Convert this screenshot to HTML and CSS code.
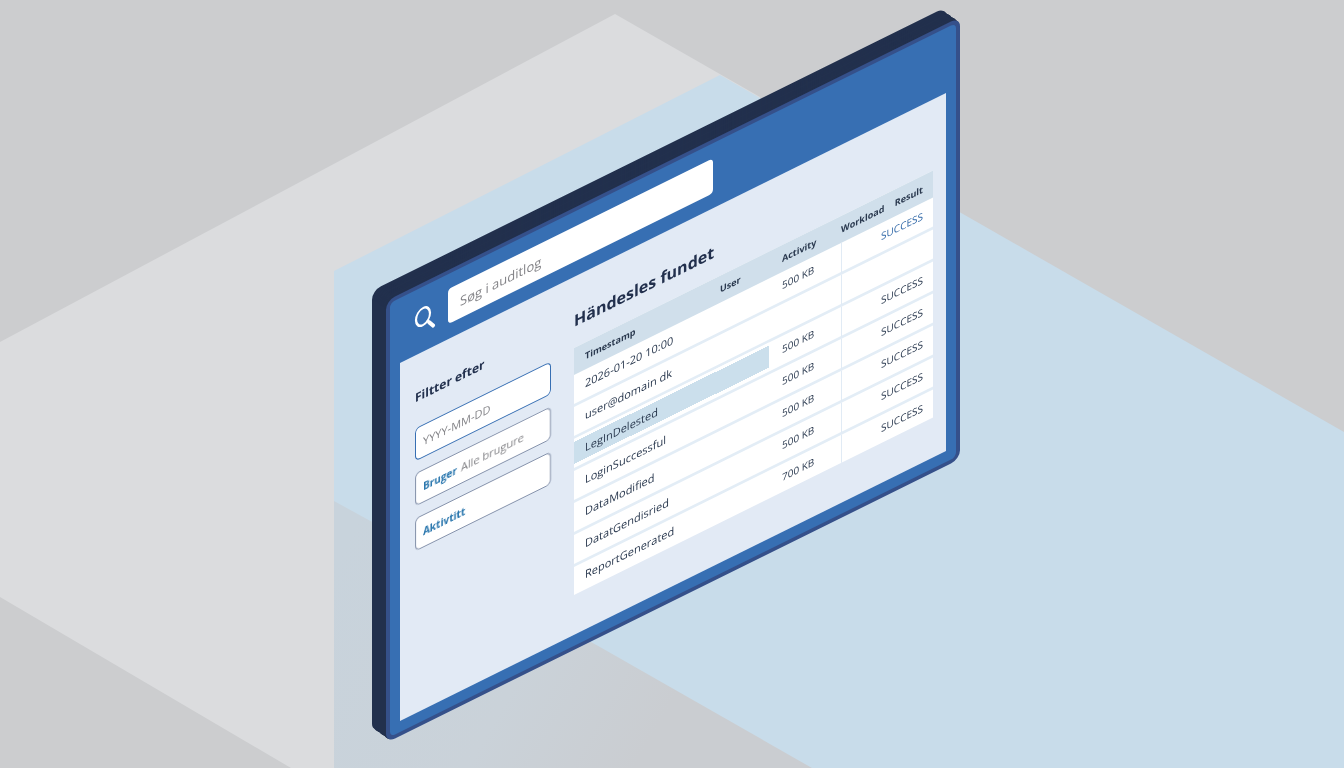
FILE: index.html
```html
<!DOCTYPE html>
<html lang="da">
<head>
    <meta charset="UTF-8">
    <meta name="viewport" content="width=device-width, initial-scale=1.0">
    <title>Auditlog</title>
    <link rel="stylesheet" href="styles.css">
</head>
<body>
    <svg class="backdrop" viewBox="0 0 1344 768" preserveAspectRatio="xMidYMid slice" aria-hidden="true">
        <defs>
            <linearGradient id="shade" gradientUnits="userSpaceOnUse" x1="334" y1="560" x2="650" y2="740">
                <stop offset="0" stop-color="#c8d3dc"/>
                <stop offset="0.6" stop-color="#cad2d9"/>
                <stop offset="1" stop-color="#cacdd1"/>
            </linearGradient>
        </defs>
        <polygon fill="#dbdcde" points="0,342 615,14 760,97 760,768 291,768 0,597"/>
        <polygon fill="#c8dcea" points="334,271 720,75 1344,432 1344,768 334,768"/>
        <polygon fill="url(#shade)" points="334,501 600,647 812,768 334,768"/>
    </svg>
    <main class="stage">
        <div class="panel">
            <header class="topbar">
                <svg class="search-icon" viewBox="0 0 22 28" aria-hidden="true">
                    <ellipse cx="9" cy="11" rx="7" ry="8.500"/>
                    <path d="M13.500 17.500l1.500 2"/>
                    <path class="handle" d="M15 19.500l4.500 6"/>
                </svg>
                <input class="search" type="text" placeholder="Søg i auditlog" aria-label="Søg i auditlog">
            </header>
            <div class="screen">
                <aside class="filters">
                    <h2>Filtter efter</h2>
                    <label class="field active">
                        <input type="text" placeholder="YYYY-MM-DD" aria-label="Dato">
                    </label>
                    <label class="field">
                        <span>Bruger</span>
                        <input type="text" placeholder="Alle brugure">
                    </label>
                    <label class="field">
                        <span>Aktivtitt</span>
                        <input type="text">
                    </label>
                </aside>
                <section class="results">
                    <h1>Händesles fundet</h1>
                    <table>
                        <colgroup>
                            <col class="col-time">
                            <col class="col-user">
                            <col class="col-activity">
                            <col class="col-workload">
                            <col class="col-result">
                        </colgroup>
                        <thead>
                            <tr><th>Timestamp</th><th>User</th><th>Activity</th><th>Workload</th><th>Result</th></tr>
                        </thead>
                        <tbody>
                            <tr><td>2026-01-20 10:00</td><td></td><td>500 KB</td><td></td><td class="link">SUCCESS</td></tr>
                            <tr><td>user@domain dk</td><td></td><td></td><td></td><td></td></tr>
                            <tr class="selected"><td>LegInDelested</td><td></td><td>500 KB</td><td></td><td>SUCCESS</td></tr>
                            <tr><td>LoginSuccessful</td><td></td><td>500 KB</td><td></td><td>SUCCESS</td></tr>
                            <tr><td>DataModified</td><td></td><td>500 KB</td><td></td><td>SUCCESS</td></tr>
                            <tr><td>DatatGendisried</td><td></td><td>500 KB</td><td></td><td>SUCCESS</td></tr>
                            <tr><td>ReportGenerated</td><td></td><td>700 KB</td><td></td><td>SUCCESS</td></tr>
                        </tbody>
                    </table>
                </section>
            </div>
        </div>
    </main>
</body>
</html>
```
FILE: styles.css
```css
* {
    box-sizing: border-box;
}
body {
    margin: 0;
    font-family: "Open Sans", "Noto Sans", sans-serif;
    font-size: 11px;
    color: #2a394f;
    background: #cccdcf;
    overflow: hidden;
}
.backdrop {
    position: fixed;
    inset: 0;
    width: 100%;
    height: 100%;
    z-index: -1;
}
.stage {
    min-height: 100vh;
    display: flex;
    align-items: center;
    justify-content: center;
    padding: 0 0 8px 2px;
}

/* the panel leans back to the right, the shadows build its thick edge */
.panel {
    width: 100%;
    max-width: 574px;
    transform: skewY(-26.3deg);
    background: #376fb3;
    border: 4px solid #35508a;
    border-radius: 9px;
    padding: 0 10px 11px;
    box-shadow:
        -1px -1px #22304d, -2px -2px #22304d, -3px -4px #22304d, -4px -5px #22304d,
        -5px -6px #22304d, -6px -7px #22304d, -7px -8px #22304d, -8px -10px #22304d,
        -9px -11px #22304d, -10px -12px #22304d, -11px -13px #22304d, -12px -14px #22304d,
        -13px -16px #22304d, -14px -17px #22304d;
}
.topbar {
    height: 65px;
    display: flex;
    align-items: center;
    gap: 12px;
    padding: 0 14px;
}
.search-icon {
    width: 22px;
    height: 28px;
    fill: none;
    stroke: #fff;
    stroke-width: 2.200;
    stroke-linecap: round;
}
.search-icon .handle {
    stroke-width: 3.200;
}
.search {
    width: 265px;
    height: 35px;
    border: 0;
    border-radius: 4px;
    padding: 0 12px;
    background: #fff;
    font: 13px "Open Sans", "Noto Sans", sans-serif;
}
input::placeholder {
    color: #848488;
    opacity: 1;
}
.screen {
    display: grid;
    grid-template-columns: 136px 1fr;
    gap: 23px;
    padding: 33px 13px 40px 15px;
    background: #e2eaf5;
}
.filters {
    display: flex;
    flex-direction: column;
    gap: 12px;
}
h1, h2 {
    margin: 0;
    color: #22304d;
    white-space: nowrap;
}
h2 {
    font-size: 12px;
    line-height: 20px;
    padding-bottom: 8px;
}
.field {
    display: flex;
    align-items: center;
    gap: 4px;
    height: 33px;
    padding: 0 7px;
    background: #fff;
    border: 1px solid #8592ab;
    border-radius: 5px;
}
.field.active {
    border-color: #376fb3;
}
.field span {
    color: #2674ac;
    font-weight: 700;
    font-size: 10px;
}
.field input {
    flex: 1;
    min-width: 0;
    padding: 0;
    border: 0;
    background: none;
    font: 11px "Open Sans", "Noto Sans", sans-serif;
}
h1 {
    font-size: 16px;
    font-weight: 700;
    line-height: 22px;
    padding-bottom: 16px;
}
table {
    width: 100%;
    height: 247px;
    table-layout: fixed;
    border-collapse: separate;
    border-spacing: 0;
    background: #fff;
}
.col-time { width: 138px; }
.col-user { width: 57px; }
.col-activity { width: 72px; }
.col-workload { width: 38px; }
th, td {
    padding: 0;
    text-align: left;
    white-space: nowrap;
}
th {
    height: 27px;
    background: #d0dfeb;
    font-size: 9px;
    font-weight: 700;
}
td {
    padding-bottom: 3px;
    border-bottom: 3px solid #e3edf6;
}
tbody tr:last-child td {
    border-bottom: 0;
}
th:nth-child(1), td:nth-child(1) { padding-left: 11px; }
th:nth-child(2) { padding-left: 8px; }
th:nth-child(3), td:nth-child(3) { padding-left: 13px; }
th:nth-child(5), td:nth-child(5) {
    text-align: right;
    padding-right: 10px;
}
td:nth-child(3), td:nth-child(5) {
    font-size: 10px;
}
td:nth-child(4) {
    border-left: 1px solid #e1ebf5;
}
.link {
    color: #3269a8;
}
.selected td:nth-child(-n+2) {
    background: linear-gradient(#fff 3px, #cbdfec 3px 25px, #fff 25px);
}
```
